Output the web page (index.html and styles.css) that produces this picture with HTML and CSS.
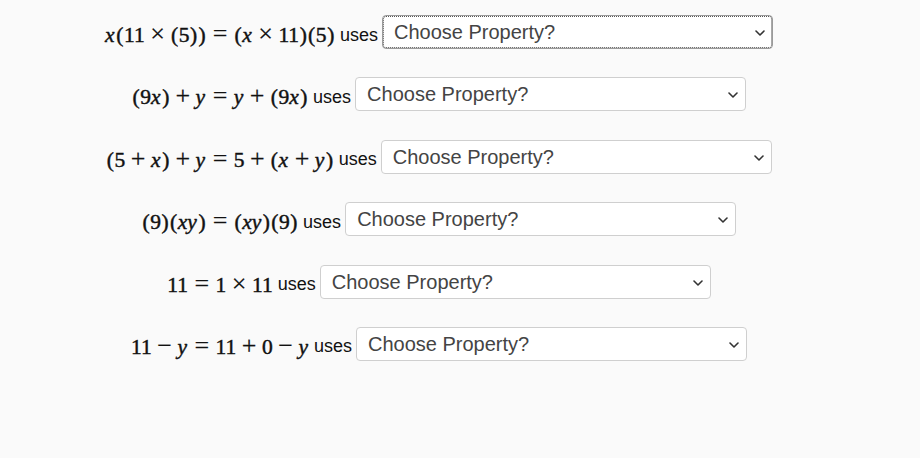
FILE: index.html
```html
<!DOCTYPE html>
<html>
<head>
<meta charset="utf-8">
<link rel="stylesheet" href="styles.css">
</head>
<body>
<div class="list">
  <div class="row">
    <span class="math"><i>x</i><b>(</b>11<span class="bin">×</span><b>(</b>5<b>)</b><b>)</b><span class="rel">=</span><b>(</b><i>x</i><span class="bin">×</span>11<b>)</b><b>(</b>5<b>)</b></span>
    <span class="uses">uses</span>
    <span class="pick focused"><select class="prop"><option>Choose Property?</option></select><svg class="chev" width="10" height="6" viewBox="0 0 10 6"><path d="M1 1 L5 5 L9 1" fill="none" stroke="#333" stroke-width="1.6" stroke-linecap="round" stroke-linejoin="round"/></svg></span>
  </div>
  <div class="row">
    <span class="math"><b>(</b>9<i>x</i><b>)</b><span class="bin">+</span><i>y</i><span class="rel">=</span><i>y</i><span class="bin">+</span><b>(</b>9<i>x</i><b>)</b></span>
    <span class="uses">uses</span>
    <span class="pick"><select class="prop"><option>Choose Property?</option></select><svg class="chev" width="10" height="6" viewBox="0 0 10 6"><path d="M1 1 L5 5 L9 1" fill="none" stroke="#333" stroke-width="1.6" stroke-linecap="round" stroke-linejoin="round"/></svg></span>
  </div>
  <div class="row">
    <span class="math"><b>(</b>5<span class="bin">+</span><i>x</i><b>)</b><span class="bin">+</span><i>y</i><span class="rel">=</span>5<span class="bin">+</span><b>(</b><i>x</i><span class="bin">+</span><i>y</i><b>)</b></span>
    <span class="uses">uses</span>
    <span class="pick"><select class="prop"><option>Choose Property?</option></select><svg class="chev" width="10" height="6" viewBox="0 0 10 6"><path d="M1 1 L5 5 L9 1" fill="none" stroke="#333" stroke-width="1.6" stroke-linecap="round" stroke-linejoin="round"/></svg></span>
  </div>
  <div class="row">
    <span class="math"><b>(</b>9<b>)</b><b>(</b><i>xy</i><b>)</b><span class="rel">=</span><b>(</b><i>xy</i><b>)</b><b>(</b>9<b>)</b></span>
    <span class="uses">uses</span>
    <span class="pick"><select class="prop"><option>Choose Property?</option></select><svg class="chev" width="10" height="6" viewBox="0 0 10 6"><path d="M1 1 L5 5 L9 1" fill="none" stroke="#333" stroke-width="1.6" stroke-linecap="round" stroke-linejoin="round"/></svg></span>
  </div>
  <div class="row">
    <span class="math">11<span class="rel">=</span>1<span class="bin">×</span>11</span>
    <span class="uses">uses</span>
    <span class="pick"><select class="prop"><option>Choose Property?</option></select><svg class="chev" width="10" height="6" viewBox="0 0 10 6"><path d="M1 1 L5 5 L9 1" fill="none" stroke="#333" stroke-width="1.6" stroke-linecap="round" stroke-linejoin="round"/></svg></span>
  </div>
  <div class="row">
    <span class="math">11<span class="bin">−</span><i>y</i><span class="rel">=</span>11<span class="bin">+</span>0<span class="bin">−</span><i>y</i></span>
    <span class="uses">uses</span>
    <span class="pick"><select class="prop"><option>Choose Property?</option></select><svg class="chev" width="10" height="6" viewBox="0 0 10 6"><path d="M1 1 L5 5 L9 1" fill="none" stroke="#333" stroke-width="1.6" stroke-linecap="round" stroke-linejoin="round"/></svg></span>
  </div>
</div>
</body>
</html>
```

FILE: styles.css
```css
html, body {
  margin: 0;
  padding: 0;
  background: #fafafa;
}
body {
  width: 920px;
  height: 458px;
}
.list {
  width: 878px;
  padding-top: 15px;
  display: flex;
  flex-direction: column;
  gap: 28.4px;
}
.row {
  display: flex;
  justify-content: center;
  align-items: center;
  height: 34px;
}
.math {
  font-family: "Liberation Serif", serif;
  font-size: 21.5px;
  color: #111;
  -webkit-text-stroke: 0.45px #111;
  white-space: nowrap;
  position: relative;
  top: 2px;
}
.math i {
  font-style: italic;
  margin-right: 1px;
}
.math b {
  font-weight: normal;
  margin: 0 0.6px;
}
.bin {
  font-size: 26px;
  margin: 0 5.5px;
  -webkit-text-stroke: 0.2px #111;
}
.rel {
  font-size: 26px;
  margin: 0 6.5px;
  -webkit-text-stroke: 0.2px #111;
}
.uses {
  font-family: "Liberation Sans", Arial, sans-serif;
  font-size: 18px;
  color: #111;
  margin: 0 4px 0 5px;
  position: relative;
  top: 3px;
}
.pick {
  position: relative;
  display: block;
  width: 391px;
  height: 34px;
}
.prop {
  appearance: none;
  -webkit-appearance: none;
  width: 391px;
  height: 34px;
  font-family: "Liberation Sans", Arial, sans-serif;
  font-size: 20px;
  color: #444;
  background: #fff;
  border: 1px solid #cfcfcf;
  border-radius: 4px;
  padding: 0 11px;
  margin: 0;
}
.chev {
  position: absolute;
  right: 8px;
  top: 15px;
}
.focused .prop {
  outline: 1px dotted #555;
  outline-offset: -2px;
  border-color: #9a9a9a;
}
```
